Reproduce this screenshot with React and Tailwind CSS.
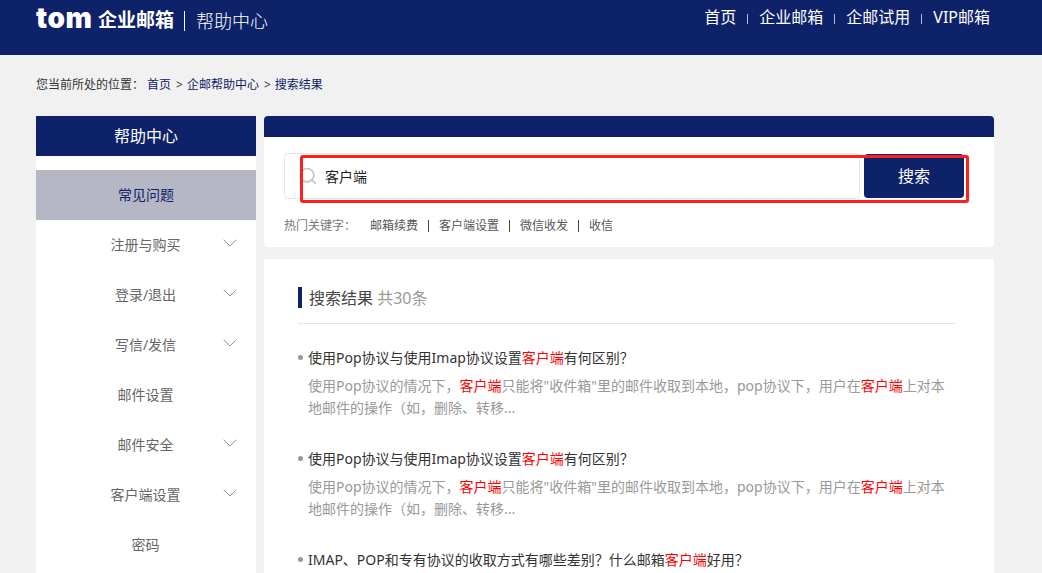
import React from 'react';
import { Search, ChevronDown } from 'lucide-react';

const cjk = "font-['Noto_Sans','Noto_Sans_CJK_SC',sans-serif]";

const menu = [
  { label: '注册与购买', arrow: true },
  { label: '登录/退出', arrow: true },
  { label: '写信/发信', arrow: true },
  { label: '邮件设置' },
  { label: '邮件安全', arrow: true },
  { label: '客户端设置', arrow: true },
  { label: '密码' },
];

const Hit = () => <span className="text-[#ff0000]">客户端</span>;

const Result = ({ children, body = true }) => (
  <li className="mb-[27px]">
    <div className="flex items-center h-[24px] text-[14px] text-[#333]">
      <span className="w-[5px] h-[5px] rounded-full bg-[#999] mr-[5px] shrink-0" />
      <span>{children}</span>
    </div>
    {body && (
      <p className="mt-[6px] pl-[10px] text-[14px] leading-[22px] text-[#999]">
        使用Pop协议的情况下，<Hit />只能将"收件箱"里的邮件收取到本地，pop协议下，用户在<Hit />上对本地邮件的操作（如，删除、转移...
      </p>
    )}
  </li>
);

export default function App() {
  return (
    <div className={`${cjk} relative h-[573px] overflow-hidden bg-[#f1f1f1]`}>
      <header className="h-[55px] bg-[#0e2269] text-white">
        <div className="flex justify-between pl-[36px] pr-[52px]">
          <div className="flex items-center h-[41px]">
            <span className="w-[57px] font-['Inter',sans-serif] font-black text-[28px] leading-none tracking-[0.5px] -mt-[5px]">tom</span>
            <span className="ml-[5px] text-[19px] leading-none font-bold">企业邮箱</span>
            <span className="ml-[10px] w-px h-[20px] bg-white" />
            <span className="ml-[11px] text-[18px] leading-none font-light">帮助中心</span>
          </div>
          <nav className="flex items-center h-[34px] text-[16px]">
            <a>首页</a>
            <span className="mx-[11px] w-px h-[10px] bg-[#b9bdd0] mt-[3px]" />
            <a>企业邮箱</a>
            <span className="mx-[11px] w-px h-[10px] bg-[#b9bdd0] mt-[3px]" />
            <a>企邮试用</a>
            <span className="mx-[11px] w-px h-[10px] bg-[#b9bdd0] mt-[3px]" />
            <a>VIP邮箱</a>
          </nav>
        </div>
      </header>

      <div className="flex items-center h-[59px] mb-[2px] pl-[36px] text-[12px] text-[#333]">
        <span>您当前所处的位置：</span>
        <a className="ml-[3px] text-[#0e2269]">首页</a>
        <span className="ml-[5px] mr-[4px]">&gt;</span>
        <a className="text-[#0e2269]">企邮帮助中心</a>
        <span className="ml-[5px] mr-[4px]">&gt;</span>
        <a className="text-[#0e2269]">搜索结果</a>
      </div>

      <div className="flex items-start gap-[8px] px-[36px]">
        <aside className="w-[220px] h-[500px] shrink-0 bg-white">
          <div className="h-[40px] bg-[#0e2269] text-white text-[16px] flex items-center justify-center">帮助中心</div>
          <div className="mt-[14px] h-[50px] pb-[2px] bg-[#b6b7c4] text-[#0e2269] text-[14px] flex items-center justify-center">常见问题</div>
          {menu.map((m) => (
            <div key={m.label} className="relative h-[50px] pb-[2px] pr-[1px] flex items-center justify-center text-[14px] text-[#666]">
              {m.label}
              {m.arrow && (
                <ChevronDown size={24} strokeWidth={1} className="absolute right-[14px] top-[11px] text-[#999]" />
              )}
            </div>
          ))}
        </aside>

        <main className="w-[730px] shrink-0">
          <section className="bg-white rounded-[4px] h-[131px]">
            <div className="h-[21px] bg-[#0e2269] rounded-t-[4px]" />
            <div className="flex gap-[4px] pl-[20px] pt-[16px]">
              <div className="flex items-center w-[576px] h-[46px] border border-[#e5e5e5] rounded-[4px]">
                <Search size={20} strokeWidth={2} className="ml-[13px] text-[#c4c4c4]" />
                <span className="ml-[7px] text-[14px] text-[#222]">客户端</span>
              </div>
              <button className="w-[100px] h-[44px] mt-[1px] bg-[#0e2269] rounded-[4px] text-white text-[16px]">搜索</button>
            </div>
            <div className="flex items-center pl-[20px] mt-[18px] text-[12px] text-[#555]">
              <span className="w-[86px] text-[#777]">热门关键字：</span>
              <span>邮箱续费</span>
              <span className="mx-[10px] w-px h-[12px] bg-[#444]" />
              <span>客户端设置</span>
              <span className="mx-[10px] w-px h-[12px] bg-[#444]" />
              <span>微信收发</span>
              <span className="mx-[10px] w-px h-[12px] bg-[#444]" />
              <span>收信</span>
            </div>
          </section>

          <section className="mt-[12px] bg-white pl-[34px] pr-[39px] pt-[28px] h-[400px]">
            <div className="flex items-center pb-[15px] border-b border-[#e5e5e5]">
              <span className="w-[4px] h-[21px] bg-[#0e2269] mr-[7px]" />
              <h2 className="h-[21px] text-[16px] leading-[23px] text-[#444]">搜索结果 <span className="text-[#999]">共30条</span></h2>
            </div>
            <ul className="pt-[21px]">
              <Result>使用Pop协议与使用Imap协议设置<Hit />有何区别？</Result>
              <Result>使用Pop协议与使用Imap协议设置<Hit />有何区别？</Result>
              <Result body={false}>IMAP、POP和专有协议的收取方式有哪些差别？什么邮箱<Hit />好用？</Result>
            </ul>
          </section>
        </main>
      </div>

      {/* red annotation box over the search bar */}
      <div className="absolute left-[300px] top-[155px] w-[669px] h-[48px] border-[3px] border-[#fb1f1f] rounded-[3px] pointer-events-none" />
    </div>
  );
}
